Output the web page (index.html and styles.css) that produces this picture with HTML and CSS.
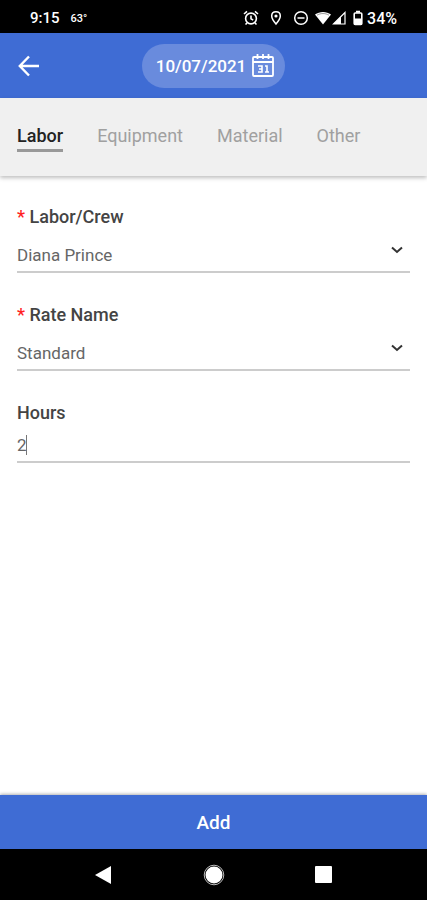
FILE: index.html
```html
<!DOCTYPE html>
<html lang="en">
<head>
    <meta charset="UTF-8">
    <meta name="viewport" content="width=device-width, initial-scale=1.0">
    <title>Add Labor</title>
    <link rel="stylesheet" href="styles.css">
</head>
<body>
    <div class="status-bar">
        <span class="time">9:15</span>
        <span class="temperature">63°</span>
        <div class="status-icons">
            <svg width="16" height="16" viewBox="0 0 16 16" fill="none" stroke="#fff" stroke-width="1.6">
                <circle cx="8" cy="8.5" r="5.4"/>
                <path d="M8 5.5v3.3l2.2 1.3M1 4l3-2.6M15 4l-3-2.6M4 13l-1.5 1.5M12 13l1.500 1.500"/>
            </svg>
            <svg class="pin" width="12" height="16" viewBox="0 0 12 16">
                <path d="M6 1.8C3.500 1.8 1.700 3.600 1.700 6 1.700 9 6 14 6 14s4.300-5 4.300-8c0-2.400-1.800-4.200-4.300-4.200z" fill="none" stroke="#fff" stroke-width="1.5"/>
                <circle cx="6" cy="6" r="1.6" fill="#fff"/>
            </svg>
            <svg class="dnd" width="16" height="16" viewBox="0 0 16 16" fill="none" stroke="#fff" stroke-width="1.5">
                <circle cx="8" cy="8" r="6.3"/>
                <path d="M4.5 8h7"/>
            </svg>
            <svg width="16" height="16" viewBox="0 0 16 16">
                <path d="M0 4.5C4.5 1 11.5 1 16 4.5L8 14.5z" fill="#fff"/>
                <path d="M2 5.2C5.5 3 10.5 3 14 5.2" fill="none" stroke="#000" stroke-width=".8" opacity=".5"/>
            </svg>
            <svg class="signal" width="14" height="16" viewBox="0 0 14 16">
                <path d="M13 2.5V14H1.5z" fill="none" stroke="#fff" stroke-width="1.2"/>
                <path d="M9 6.5V14H1.5z" fill="#fff"/>
            </svg>
            <svg class="battery" width="10" height="16" viewBox="0 0 10 16">
                <path d="M3 .8h4v2H3zM1 8.500h8V15H1z" fill="#fff"/>
                <rect x="1.2" y="3" width="7.6" height="11.5" rx="1" fill="none" stroke="#fff" stroke-width="1.6"/>
            </svg>
            <span class="percent">34%</span>
        </div>
    </div>

    <header>
        <button type="button" class="back" aria-label="Back">
            <svg width="22" height="22" viewBox="0 0 22 22" fill="none" stroke="#fff" stroke-width="2.4">
                <path d="M21 11H2M11 1.500L1.800 11l9.200 9.500"/>
            </svg>
        </button>
        <button type="button" class="date-button">
            <span>10/07/2021</span>
            <svg width="22" height="24" viewBox="0 0 22 24" fill="none" stroke="#fff">
                <rect x="1" y="3" width="20" height="19" rx="1" stroke-width="1.8"/>
                <path d="M1 8h20M5.500 0v5M11 0v5M16.500 0v5" stroke-width="1.8"/>
                <path d="M6 12h4v6H6M7 15h3M13 12h2v6M13 18h4" stroke-width="1.6"/>
            </svg>
        </button>
    </header>

    <nav class="tabs">
        <a href="#labor" class="active">Labor</a>
        <a href="#equipment">Equipment</a>
        <a href="#material">Material</a>
        <a href="#other">Other</a>
    </nav>

    <main>
        <form id="laborForm">
            <div class="field">
                <label for="crew"><span class="required">*</span> Labor/Crew</label>
                <div class="select-box">
                    <select id="crew" required>
                        <option>Diana Prince</option>
                    </select>
                    <svg width="14" height="10" viewBox="0 0 14 10" fill="none" stroke="#333" stroke-width="2">
                        <path d="M2 2.500l5 4.500 5-4.500"/>
                    </svg>
                </div>
            </div>
            <div class="field">
                <label for="rate"><span class="required">*</span> Rate Name</label>
                <div class="select-box">
                    <select id="rate" required>
                        <option>Standard</option>
                    </select>
                    <svg width="14" height="10" viewBox="0 0 14 10" fill="none" stroke="#333" stroke-width="2">
                        <path d="M2 2.500l5 4.500 5-4.500"/>
                    </svg>
                </div>
            </div>
            <div class="field">
                <label for="hours">Hours</label>
                <input type="text" id="hours" inputmode="decimal" value="2">
            </div>
        </form>
    </main>

    <button type="submit" form="laborForm" class="add-button">Add</button>

    <div class="system-nav">
        <button type="button" aria-label="System back">
            <svg width="22" height="22" viewBox="0 0 22 22"><path d="M18 2v18L2 11z" fill="#fff"/></svg>
        </button>
        <button type="button" aria-label="Home">
            <svg width="22" height="22" viewBox="0 0 22 22">
                <circle cx="11" cy="11" r="8.5" fill="#fff"/>
                <circle cx="11" cy="11" r="9.8" fill="none" stroke="#bbb" stroke-width="1"/>
            </svg>
        </button>
        <button type="button" aria-label="Recent apps">
            <svg width="22" height="22" viewBox="0 0 22 22"><rect x="2" y="2" width="17" height="17" rx="1" fill="#fff"/></svg>
        </button>
    </div>
</body>
</html>
```
FILE: styles.css
```css
* {
    box-sizing: border-box;
}

body {
    font-family: Roboto, sans-serif;
    font-size: 17px;
    color: #444;
    background-color: #fff;
    margin: 0;
    min-height: 100vh;
    display: flex;
    flex-direction: column;
}

svg {
    display: block;
}

button {
    font-family: inherit;
    color: white;
    border: none;
    padding: 0;
    cursor: pointer;
    background: none;
}

.status-bar {
    display: flex;
    align-items: center;
    height: 33px;
    padding: 3px 30px 0;
    background-color: #000;
    color: white;
    font-size: 15px;
    font-weight: 500;
}

.temperature {
    margin-left: 11px;
    font-size: 11px;
}

.status-icons {
    display: flex;
    align-items: center;
    margin-left: auto;
}

.pin {
    margin: 0 11px;
}

.dnd {
    margin-right: 6px;
}

.signal {
    margin-left: 1px;
}

.battery {
    margin: 0 4px 0 7px;
}

.percent {
    font-size: 16px;
}

header {
    display: grid;
    grid-template-columns: 1fr auto 1fr;
    align-items: center;
    height: 65px;
    padding: 0 18px;
    background-color: #3f6cd4;
}

.back {
    justify-self: start;
}

.date-button {
    display: flex;
    align-items: center;
    gap: 6px;
    height: 44px;
    padding: 0 11px 0 14px;
    border-radius: 22px;
    background-color: #698bdd;
    font-size: 17px;
    font-weight: 500;
}

.tabs {
    display: flex;
    align-items: flex-start;
    gap: 34px;
    height: 78px;
    padding: 26px 17px 0;
    background-color: #f0f0f0;
    box-shadow: 0 2px 4px rgba(0, 0, 0, 0.25);
}

.tabs a {
    line-height: 24px;
    padding-bottom: 1px;
    color: #a0a0a0;
    font-size: 18px;
    text-decoration: none;
}

.tabs .active {
    border-bottom: 3px solid #999;
    color: #222;
    font-weight: 500;
}

main {
    flex: 1;
    padding: 29px 17px;
}

.field {
    margin-bottom: 30px;
}

label {
    display: block;
    line-height: 24px;
    font-size: 18px;
    font-weight: 500;
}

.required {
    color: #f22;
}

.select-box {
    display: grid;
    align-items: center;
    border-bottom: 2px solid #ccc;
}

.select-box select,
.select-box svg {
    grid-area: 1 / 1;
}

.select-box svg {
    justify-self: end;
    margin-right: 6px;
    pointer-events: none;
}

select,
input {
    width: 100%;
    padding: 0;
    border: none;
    border-radius: 0;
    outline: none;
    background-color: transparent;
    color: #666;
    font-family: inherit;
    font-size: 17px;
    font-weight: 400;
}

select {
    appearance: none;
    height: 42px;
    padding-top: 10px;
}

input {
    height: 38px;
    padding-top: 4px;
    border-bottom: 2px solid #ccc;
    /* text cursor after the value */
    background: linear-gradient(#777, #777) 9px 10px / 1px 20px no-repeat;
}

.add-button {
    height: 54px;
    background-color: #3f6cd4;
    box-shadow: 0 -1px 3px rgba(0, 0, 0, 0.3);
    font-size: 19px;
    font-weight: 500;
}

.system-nav {
    display: flex;
    justify-content: center;
    align-items: center;
    gap: 88px;
    height: 51px;
    background-color: #000;
}
```
